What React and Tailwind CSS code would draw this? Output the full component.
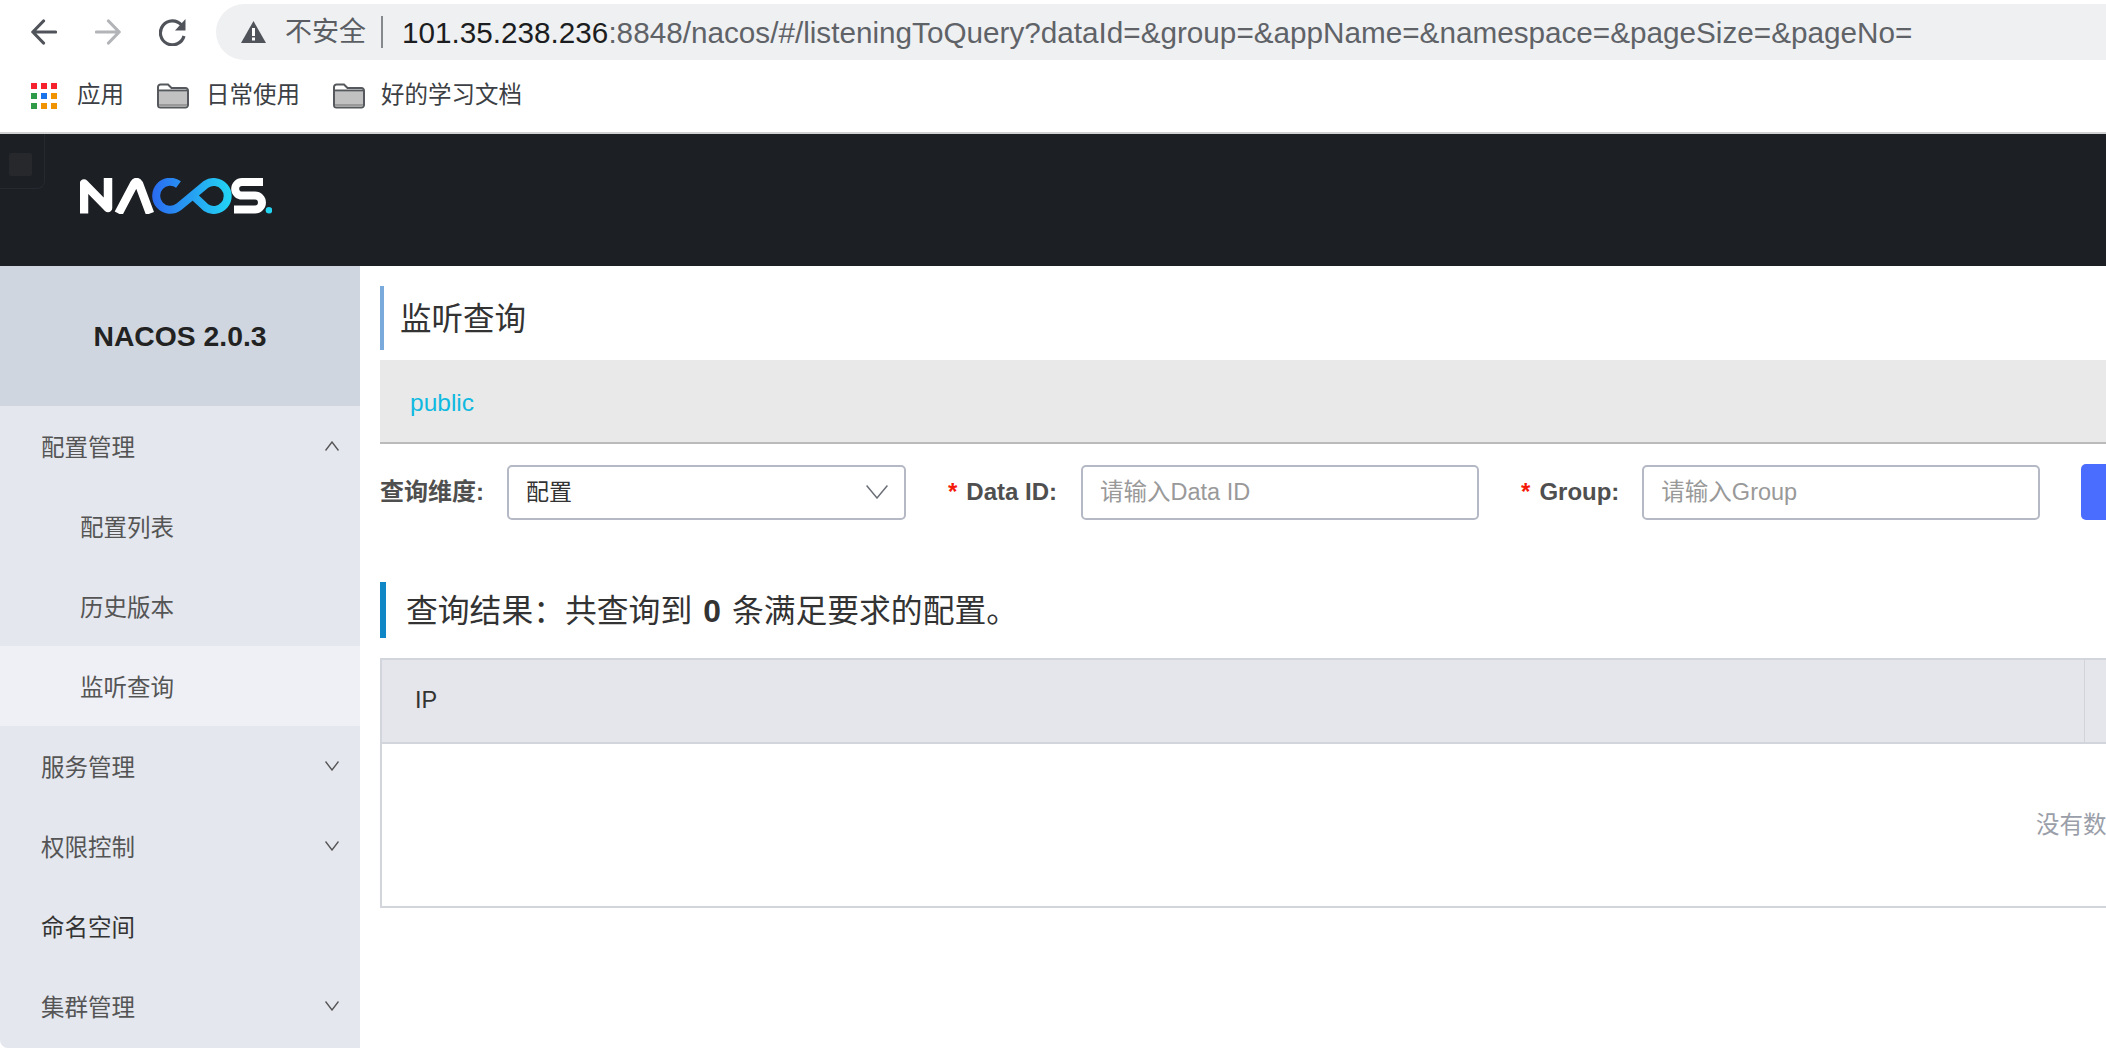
import React from 'react';

const menu = [
  { label: '配置管理', open: true },
  { label: '配置列表', sub: true },
  { label: '历史版本', sub: true },
  { label: '监听查询', sub: true, active: true },
  { label: '服务管理', arrow: true },
  { label: '权限控制', arrow: true },
  { label: '命名空间', dark: true },
  { label: '集群管理', arrow: true },
];

const dots = [
  '#f5222d', '#f5222d', '#f5222d',
  '#2f9a48', '#1a73e8', '#ef9300',
  '#2f9a48', '#ef9300', '#ef9300',
];

const Folder = () => (
  <svg width="32" height="26" viewBox="0 0 32 26" className="flex-none">
    <path d="M1 4a2.5 2.5 0 0 1 2.5-2.5h7.5l3.5 3.5h14a2.5 2.5 0 0 1 2.5 2.5V22a2.5 2.5 0 0 1-2.5 2.5h-25A2.5 2.5 0 0 1 1 22z" fill="#fff" stroke="#55585c" strokeWidth="2" />
    <path d="M2 8.5h28V22a1.5 1.5 0 0 1-1.5 1.5h-25A1.5 1.5 0 0 1 2 22z" fill="#c1c1c1" />
    <path d="M2 21h28v1a1.5 1.5 0 0 1-1.5 1.5h-25A1.5 1.5 0 0 1 2 22z" fill="#999" />
    <path d="M1.5 7.5h29" stroke="#55585c" strokeWidth="2" />
  </svg>
);

const Chevron = ({ up }) => (
  <svg width="14" height="10" viewBox="0 0 14 10" fill="none" stroke="#555" strokeWidth="1.4" className="flex-none">
    <path d={up ? 'M0.5 9.5 7 1l6.5 8.5' : 'M0.5 0.5 7 9l6.5-8.5'} />
  </svg>
);

const Logo = () => (
  <svg width="192" height="36" viewBox="0 0 192 36" fill="none" className="flex-none">
    <defs>
      <linearGradient id="nacosLoop" x1="72" y1="0" x2="152" y2="0" gradientUnits="userSpaceOnUse">
        <stop offset="0" stopColor="#2a6af0" />
        <stop offset="1" stopColor="#22d6f4" />
      </linearGradient>
    </defs>
    <path d="M4 35.500V5.500L28 30V0" stroke="#fff" strokeWidth="8.500" strokeLinejoin="round" />
    <path d="M38.500 35.500 54 6q2.500-4 5 0l11 29.500" stroke="#fff" strokeWidth="8.500" />
    <path d="M98.500 6.500A14 14 0 1 0 98.500 29L126 6.300A14 14 0 1 1 126 29.700L113 17.500" stroke="url(#nacosLoop)" strokeWidth="8" />
    <path d="M183 4H162a6.800 6.800 0 0 0 0 13.600h13a6.800 6.800 0 0 1 0 13.900H154" stroke="#fff" strokeWidth="8" />
    <circle cx="189" cy="32.300" r="3.300" fill="#22d3f2" />
  </svg>
);

const Label = ({ star, children }) => (
  <label className="flex-none text-[24px] font-bold text-[#4f4f4f] whitespace-nowrap">
    {star && <span className="text-[#f5190a] mr-[9px]">*</span>}
    {children}
  </label>
);

const TextInput = ({ placeholder }) => (
  <input
    placeholder={placeholder}
    className="flex-none w-[398px] h-[55px] border-2 border-[#b4b9c5] rounded-[5px] px-[17px] text-[23.500px] outline-none placeholder:text-[#999]"
  />
);

export default function App() {
  return (
    <div className="w-[2106px] h-[1048px] overflow-hidden bg-white flex flex-col font-['Liberation_Sans','Noto_Sans_CJK_SC',sans-serif]">
      {/* browser toolbar */}
      <div className="h-[64px] flex-none flex pt-1 pl-[31px]">
        <div className="flex items-center h-[56px]">
          <svg width="26" height="26" viewBox="0 0 26 26" fill="none" stroke="#50545a" strokeWidth="3.200" strokeLinecap="round" strokeLinejoin="round">
            <path d="M24.500 13H2M12.500 2 1.800 13l10.700 11" />
          </svg>
          <svg width="26" height="26" viewBox="0 0 26 26" fill="none" stroke="#b2b4b8" strokeWidth="3.200" strokeLinecap="round" strokeLinejoin="round" className="ml-[38px]">
            <path d="M1.500 13H24M13.500 2l10.700 11-10.700 11" />
          </svg>
          <svg width="27" height="27" viewBox="0 0 27 27" fill="none" className="ml-[38px]">
            <path d="M22.500 6A12 12 0 1 0 25 17" stroke="#50545a" strokeWidth="3.200" />
            <path d="M26.500 0v11.500H16z" fill="#50545a" />
          </svg>
        </div>
        <div className="ml-[30px] flex-1 h-[56px] bg-[#eff0f2] rounded-l-[28px] flex items-center pl-[25px]">
          <svg width="25" height="22" viewBox="0 0 25 22" className="flex-none">
            <path d="M12.500 0 25 22H0z" fill="#50545a" />
            <path d="M11 7h3v8h-3zM11 16.500h3v3h-3z" fill="#fff" />
          </svg>
          <span className="ml-[19px] text-[27px] text-[#5a5d62] whitespace-nowrap">不安全</span>
          <span className="ml-[15px] w-[2px] h-[32px] bg-[#85888c]" />
          <span className="ml-[19px] pt-[2px] text-[29.700px] text-[#5f6368] whitespace-nowrap">
            <span className="text-[#1c1d20]">101.35.238.236</span>:8848/nacos/#/listeningToQuery?dataId=&amp;group=&amp;appName=&amp;namespace=&amp;pageSize=&amp;pageNo=
          </span>
        </div>
      </div>

      {/* bookmarks */}
      <div className="h-[68px] flex-none flex items-center pl-[31px] pb-[5px] text-[23.500px] text-[#3c3f44]">
        <div className="grid grid-cols-3 gap-[4px] flex-none">
          {dots.map((c, i) => (
            <span key={i} className="w-[6px] h-[6px]" style={{ background: c }} />
          ))}
        </div>
        <span className="ml-[20px]">应用</span>
        <div className="ml-[33px]"><Folder /></div>
        <span className="ml-[17px]">日常使用</span>
        <div className="ml-[33px]"><Folder /></div>
        <span className="ml-[16px]">好的学习文档</span>
      </div>

      {/* nacos header */}
      <div className="relative h-[134px] flex-none bg-[#1c1f24] border-t-2 border-[#d2d2d2] flex items-center pl-[80px] pb-[9px]">
        <div className="absolute left-0 top-0 w-[45px] h-[55px] border-r border-b border-[#262930] rounded-br-lg">
          <div className="ml-[9px] mt-[19px] w-[23px] h-[23px] bg-[#26282c] rounded-[2px]" />
        </div>
        <Logo />
      </div>

      <div className="flex-1 flex min-h-0">
        {/* sidebar */}
        <aside className="w-[360px] flex-none bg-[#e4e7ee] rounded-bl-lg flex flex-col text-[23.500px] text-[#555]">
          <div className="h-[140px] flex-none bg-[#cfd6df] flex items-center justify-center text-[28.300px] font-bold text-[#222]">
            NACOS 2.0.3
          </div>
          {menu.map((item) => (
            <div
              key={item.label}
              className={`h-[80px] flex-none flex items-center justify-between pr-[21px] ${item.sub ? 'pl-[80px]' : 'pl-[41px]'} ${item.active ? 'bg-[#eef0f6]' : ''} ${item.dark ? 'text-[#333]' : ''}`}
            >
              <span className="pt-[5px]">{item.label}</span>
              {item.open && <Chevron up />}
              {item.arrow && <Chevron />}
            </div>
          ))}
        </aside>

        {/* main */}
        <main className="flex-1 min-w-0 overflow-hidden pl-[20px] pt-[20px]">
          <div className="h-[64px] border-l-[4px] border-[#7aa9dc] pl-[16px] pt-[4px] flex items-center text-[31.500px] text-[#333]">
            监听查询
          </div>
          <div className="mt-[10px] h-[84px] bg-[#e9e9e9] border-b-2 border-[#bbb] pl-[30px] pt-[5px] flex items-center text-[24.500px] text-[#10b9e0]">
            public
          </div>
          <div className="mt-[20px] h-[56px] flex items-center whitespace-nowrap">
            <Label>查询维度:</Label>
            <div className="ml-[23px] flex-none w-[399px] h-[55px] border-2 border-[#b4b9c5] rounded-[5px] pl-[17px] pr-[16px] flex items-center justify-between text-[23px] text-[#333]">
              配置
              <svg width="22" height="14" viewBox="0 0 22 14" fill="none" stroke="#6b6f78" strokeWidth="1.500">
                <path d="M.6.6 11 13 21.400.6" />
              </svg>
            </div>
            <div className="ml-[42px]"><Label star>Data ID:</Label></div>
            <div className="ml-[24px]"><TextInput placeholder="请输入Data ID" /></div>
            <div className="ml-[42px]"><Label star>Group:</Label></div>
            <div className="ml-[23px]"><TextInput placeholder="请输入Group" /></div>
            <button className="ml-[41px] flex-none w-[120px] h-[56px] bg-[#4a6cff] rounded-[5px]" />
          </div>
          <div className="mt-[62px] h-[56px] border-l-[6px] border-[#0f86c6] pl-[20px] pt-[4px] flex items-center text-[31.800px] text-[#333] whitespace-nowrap">
            查询结果：共查询到<span className="font-bold mx-[11px]">0</span>条满足要求的配置。
          </div>
          <div className="mt-[20px] w-[3000px] h-[250px] border-2 border-[#d2d5dc] flex flex-col">
            <div className="h-[84px] flex-none bg-[#e4e6eb] border-b-2 border-[#d2d5dc] flex items-center pl-[33px] text-[23.500px] text-[#333]">
              <span className="w-[1669px] flex-none">IP</span>
              <span className="h-full w-px bg-[#d2d4da]" />
            </div>
            <div className="flex-1 flex items-center pl-[1654px] pt-[1px] text-[23.500px] text-[#9a9ea8] whitespace-nowrap">
              没有数据
            </div>
          </div>
        </main>
      </div>
    </div>
  );
}
